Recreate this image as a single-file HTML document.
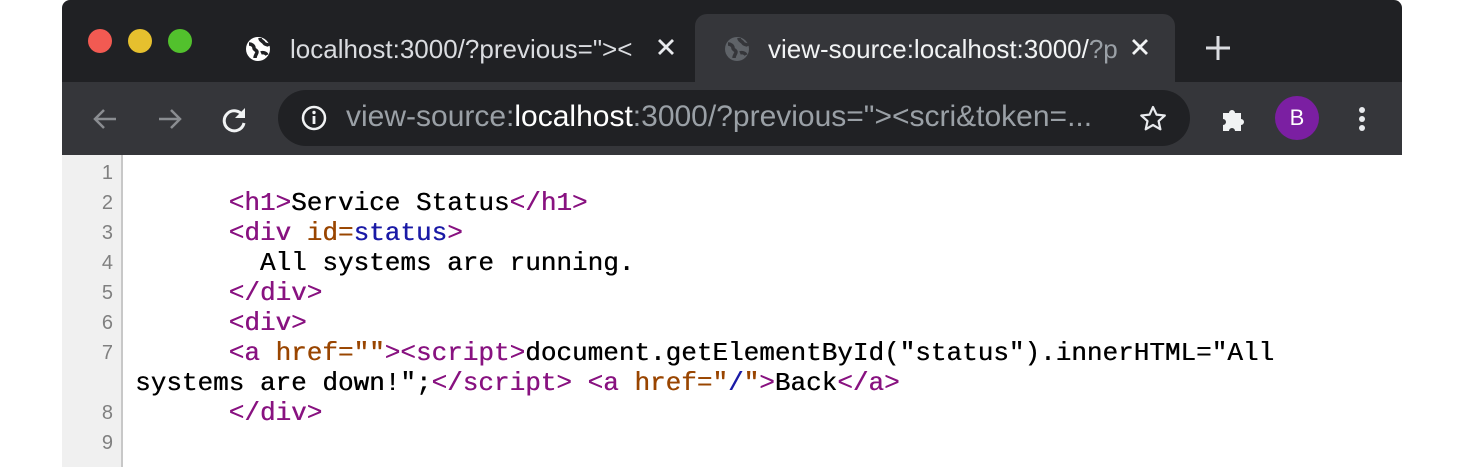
<!DOCTYPE html>
<html><head><meta charset="utf-8"><style>
*{margin:0;padding:0;box-sizing:border-box}
body{width:1465px;height:467px;background:#fff;position:relative;overflow:hidden;font-family:"Liberation Sans",sans-serif}
.win{position:absolute;left:62px;top:0;width:1340px;height:467px;background:#fff;overflow:hidden}
.strip{position:absolute;left:0;top:0;width:1340px;height:82px;background:#202124;border-radius:8px 8px 0 0}
.tl{position:absolute;top:29px;width:24px;height:24px;border-radius:50%}
.tab2{position:absolute;left:633px;top:14px;width:480px;height:70px;background:#35363a;border-radius:12px 12px 0 0}
.tbar{position:absolute;left:0;top:82px;width:1340px;height:73px;background:#35363a}
.omni{position:absolute;left:216px;top:8px;width:912px;height:56px;background:#202124;border-radius:28px}
.t{position:absolute;white-space:pre;font-size:26px;line-height:30px}
.gut{position:absolute;left:0;top:155px;width:61px;height:312px;background:#f0f0f0;border-right:2px solid #c8c8c8}
.ln{position:absolute;right:8px;width:40px;text-align:right;font-size:20px;color:#808080;line-height:30px}
.code{position:absolute;left:73px;font-family:"Liberation Mono",monospace;font-size:26px;line-height:30px;white-space:pre;color:#000;text-shadow:0.4px 0 0 currentColor}
.g{color:#881280}.a{color:#994500}.v{color:#1a1aa6}
.x{position:absolute;top:36px}
</style></head><body>
<div class="win">
<div class="strip">
 <div class="tl" style="left:26px;background:#f25a52"></div>
 <div class="tl" style="left:66px;background:#e6c02e"></div>
 <div class="tl" style="left:106px;background:#52c12d"></div>
 <svg style="position:absolute;left:182px;top:35px" width="28" height="28" viewBox="0 0 28 28"><circle cx="14" cy="14" r="12" fill="#fff"/><path d="M5 9c3 0 5 2 5 4s3 2 3 4-2 3-2 6M16 3c0 3 3 3 4 5s4 1 5 3M17 18c2-1 5 0 6 2" stroke="#202124" stroke-width="3.5" fill="none"/></svg>
 <div class="t" style="left:228px;top:34px;color:#dadce0">localhost:3000/?previous="&gt;&lt;</div>
 <svg class="x" style="left:593px" width="22" height="22" viewBox="0 0 22 22"><path d="M4 4l14 14M18 4L4 18" stroke="#e8eaed" stroke-width="2.8"/></svg>
 <div class="tab2"></div>
 <svg style="position:absolute;left:661px;top:35px" width="28" height="28" viewBox="0 0 28 28"><circle cx="14" cy="14" r="12" fill="#5f6368"/><path d="M5 9c3 0 5 2 5 4s3 2 3 4-2 3-2 6M16 3c0 3 3 3 4 5s4 1 5 3M17 18c2-1 5 0 6 2" stroke="#35363a" stroke-width="3.5" fill="none"/></svg>
 <div class="t" style="left:706px;top:34px;color:#f1f3f4">view-source:localhost:3000/<span style="color:#9aa0a6">?p</span></div>
 <svg class="x" style="left:1067px" width="22" height="22" viewBox="0 0 22 22"><path d="M4 4l14 14M18 4L4 18" stroke="#f1f3f4" stroke-width="2.8"/></svg>
 <svg style="position:absolute;left:1143px;top:35px" width="26" height="26" viewBox="0 0 26 26"><path d="M13 1v24M1 13h24" stroke="#dadce0" stroke-width="3"/></svg>
</div>
<div class="tbar">
 <svg style="position:absolute;left:28px;top:22px" width="30" height="30" viewBox="0 0 30 30"><path d="M26 15H5M14 6l-9 9 9 9" stroke="#8a8d91" stroke-width="2.5" fill="none"/></svg>
 <svg style="position:absolute;left:93px;top:22px" width="30" height="30" viewBox="0 0 30 30"><path d="M4 15h21M16 6l9 9-9 9" stroke="#8a8d91" stroke-width="2.5" fill="none"/></svg>
 <svg style="position:absolute;left:158px;top:22px" width="30" height="30" viewBox="0 0 30 30"><path d="M23 12A10 10 0 1 0 24 19" stroke="#f1f3f4" stroke-width="3" fill="none"/><path d="M25 4v10h-10z" fill="#f1f3f4"/></svg>
 <div class="omni">
  <svg style="position:absolute;left:22px;top:14px" width="28" height="28" viewBox="0 0 28 28"><circle cx="14" cy="14" r="11" stroke="#f1f3f4" stroke-width="2.5" fill="none"/><rect x="12.6" y="12" width="2.8" height="8" fill="#f1f3f4"/><circle cx="14" cy="8.5" r="1.7" fill="#f1f3f4"/></svg>
  <div class="t" style="left:68px;top:10px;font-size:30px;line-height:34px;color:#9aa0a6">view-source:<span style="color:#fff">localhost</span>:3000/?previous="&gt;&lt;scri&amp;token=...</div>
  <svg style="position:absolute;left:860px;top:14px" width="30" height="30" viewBox="0 0 30 30"><path d="M15 3l3.5 7.6 8.3.9-6.2 5.6 1.8 8.2L15 21l-7.3 4.3 1.8-8.2-6.2-5.6 8.3-.9z" stroke="#e8eaed" stroke-width="2.2" fill="none" stroke-linejoin="round"/></svg>
 </div>
 <svg style="position:absolute;left:1157px;top:22px" width="30" height="30" viewBox="0 0 30 30"><path d="M4 9h6a3 3 0 1 1 6 0h6v6a3 3 0 1 1 0 6v6H16a3 3 0 1 0-6 0H4v-6a3 3 0 1 0 0-6z" fill="#f1f3f4"/></svg>
 <div style="position:absolute;left:1213px;top:14px;width:44px;height:44px;border-radius:50%;background:#7b1fa2;color:#fff;font-size:22px;line-height:44px;text-align:center">B</div>
 <div style="position:absolute;left:1297px;top:25px;width:6px;height:6px;border-radius:50%;background:#e8eaed"></div>
 <div style="position:absolute;left:1297px;top:34px;width:6px;height:6px;border-radius:50%;background:#e8eaed"></div>
 <div style="position:absolute;left:1297px;top:43px;width:6px;height:6px;border-radius:50%;background:#e8eaed"></div>
</div>
<div class="gut">
 <div class="ln" style="top:3px">1</div><div class="ln" style="top:33px">2</div><div class="ln" style="top:63px">3</div><div class="ln" style="top:93px">4</div><div class="ln" style="top:123px">5</div><div class="ln" style="top:153px">6</div><div class="ln" style="top:183px">7</div><div class="ln" style="top:243px">8</div><div class="ln" style="top:273px">9</div>
</div>
<div class="code" style="top:158px">
      <span class="g">&lt;h1&gt;</span>Service Status<span class="g">&lt;/h1&gt;</span>
      <span class="g">&lt;div </span><span class="a">id=</span><span class="v">status</span><span class="g">&gt;</span>
        All systems are running.
      <span class="g">&lt;/div&gt;</span>
      <span class="g">&lt;div&gt;</span>
      <span class="g">&lt;a </span><span class="a">href=""</span><span class="g">&gt;&lt;script&gt;</span>document.getElementById("status").innerHTML="All
systems are down!";<span class="g">&lt;/script&gt;</span> <span class="g">&lt;a </span><span class="a">href="</span><span class="v">/</span><span class="a">"</span><span class="g">&gt;</span>Back<span class="g">&lt;/a&gt;</span>
      <span class="g">&lt;/div&gt;</span>
</div>
</div>
</body></html>
